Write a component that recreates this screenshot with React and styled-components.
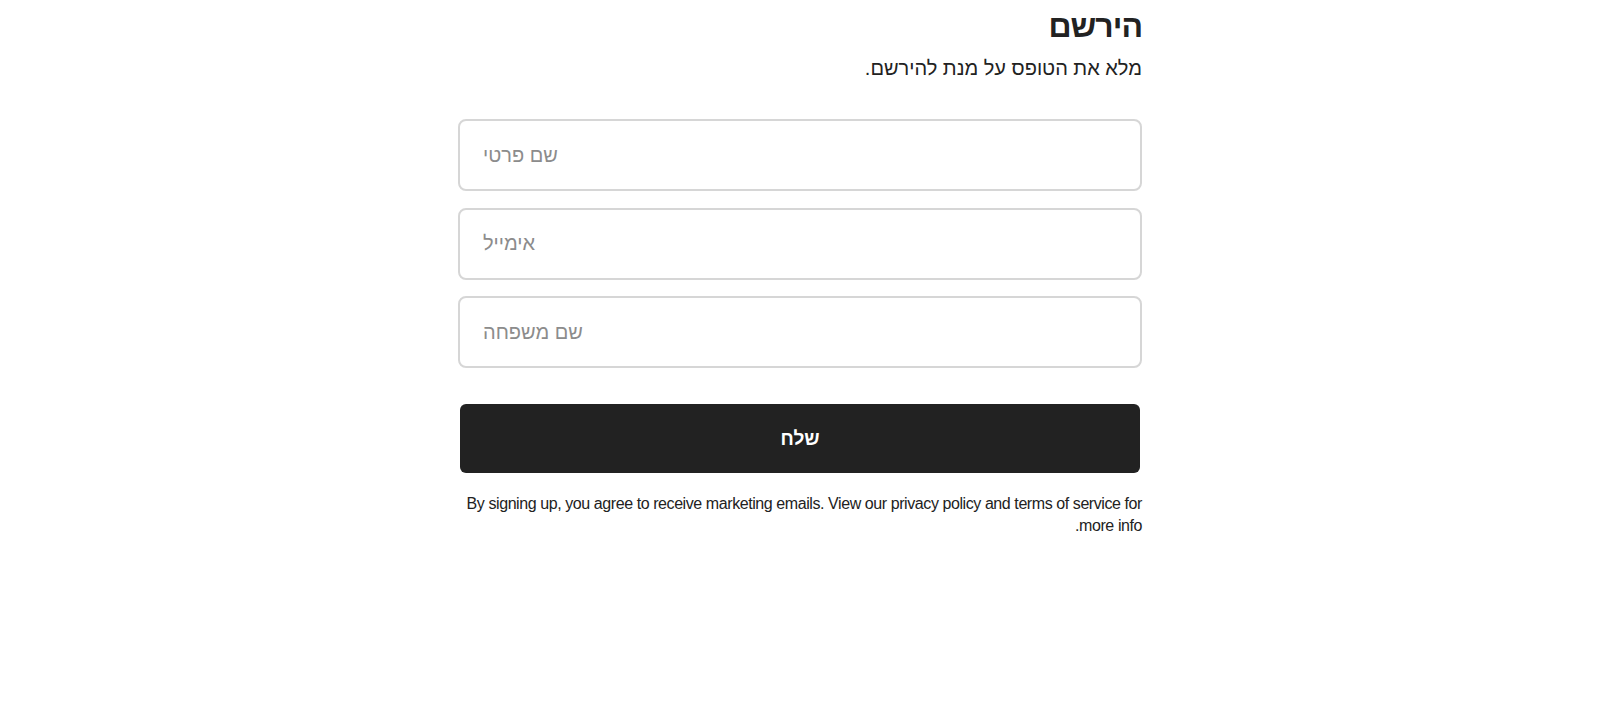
import React from "react";
import styled, { createGlobalStyle } from "styled-components";

const GlobalStyle = createGlobalStyle`
  body {
    margin: 8px;
    background: #ffffff;
    font-family: "Liberation Sans", Arial, sans-serif;
    color: #222222;
  }
`;

const Wrapper = styled.div`
  width: 684px;
  margin: 0 auto;
  direction: rtl;
`;

const Title = styled.h1`
  margin: 0;
  font-size: 32px;
  font-weight: 700;
  letter-spacing: -1px;
  color: #222222;
`;

const Subtitle = styled.p`
  margin: 12px 0 0;
  font-size: 20px;
  color: #222222;
`;

const Form = styled.form`
  display: flex;
  flex-direction: column;
  gap: 16.5px;
  margin-top: 39px;
`;

const Input = styled.input`
  box-sizing: border-box;
  width: 100%;
  height: 72px;
  padding: 0 23px;
  border: 2px solid #d6d6d6;
  border-radius: 8px;
  font-family: inherit;
  font-size: 20px;
  color: #222222;
  direction: ltr;
  text-align: left;
  outline: none;

  &::placeholder {
    color: #8c8c8c;
  }
`;

const Button = styled.button`
  box-sizing: border-box;
  width: 680px;
  height: 69px;
  margin: 19.5px auto 0;
  border: none;
  border-radius: 6px;
  background: #222222;
  color: #ffffff;
  font-family: inherit;
  font-size: 19px;
  font-weight: 700;
  cursor: pointer;
`;

const Note = styled.p`
  margin: 20px 0 0;
  font-size: 16px;
  line-height: 21.5px;
  letter-spacing: -0.42px;
  color: #222222;
`;

export default function App() {
  return (
    <>
      <GlobalStyle />
      <Wrapper>
        <Title>הירשם</Title>
        <Subtitle>מלא את הטופס על מנת להירשם.</Subtitle>
        <Form onSubmit={(e) => e.preventDefault()}>
          <Input type="text" placeholder="שם פרטי" />
          <Input type="email" placeholder="אימייל" />
          <Input type="text" placeholder="שם משפחה" />
          <Button type="submit">שלח</Button>
        </Form>
        <Note>
          By signing up, you agree to receive marketing emails. View our privacy
          policy and terms of service for more info.
        </Note>
      </Wrapper>
    </>
  );
}
